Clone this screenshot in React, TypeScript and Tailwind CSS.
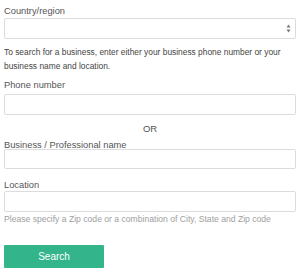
import React from "react";

const Label = ({ children }: { children: React.ReactNode }) => (
  <div className="text-[9.3px] leading-[12px] text-[#555] px-[4px]">{children}</div>
);

const Input = ({ h = "h-[21px]" }: { h?: string }) => (
  <div className={`mx-[4px] ${h} border border-[#dcdcdc] rounded-[2px] bg-white`} />
);

export default function App() {
  return (
    <div
      className="w-[300px] h-[272px] bg-white overflow-hidden pt-[5px]"
      style={{ fontFamily: '"Liberation Sans", Arial, sans-serif' }}
    >
      <Label>Country/region</Label>
      <div className="mx-[4px] mt-[1px] h-[21px] border border-[#dcdcdc] rounded-[2px] bg-white flex items-center justify-end pr-[4px]">
        <svg width="5" height="9" viewBox="0 0 5 9">
          <path d="M2.5 0.5 L4.5 3.5 L0.5 3.5 Z" fill="#777" />
          <path d="M2.5 8.5 L4.5 5.5 L0.5 5.5 Z" fill="#777" />
        </svg>
      </div>
      <p className="mt-[7px] px-[4px] text-[8.4px] leading-[13.5px] text-[#444]">
        To search for a business, enter either your business phone number or your business name and location.
      </p>
      <div className="mt-[6px]">
        <Label>Phone number</Label>
      </div>
      <div className="mt-[3px]">
        <Input h="h-[21px]" />
      </div>
      <div className="mt-[8px] text-center text-[9.5px] leading-[12px] text-[#555]">OR</div>
      <div className="mt-[4px]">
        <Label>Business / Professional name</Label>
      </div>
      <div className="mt-[-2px]">
        <Input h="h-[20px]" />
      </div>
      <div className="mt-[10px]">
        <Label>Location</Label>
      </div>
      <div className="mt-[0px]">
        <Input h="h-[21px]" />
      </div>
      <div className="mt-[1px] px-[4px] text-[8.6px] leading-[12px] text-[#a0a0a0] whitespace-nowrap">
        Please specify a Zip code or a combination of City, State and Zip code
      </div>
      <button className="mt-[20px] ml-[4px] w-[100px] h-[23px] bg-[#33b48b] text-white text-[10px] rounded-[1px]">
        Search
      </button>
    </div>
  );
}
